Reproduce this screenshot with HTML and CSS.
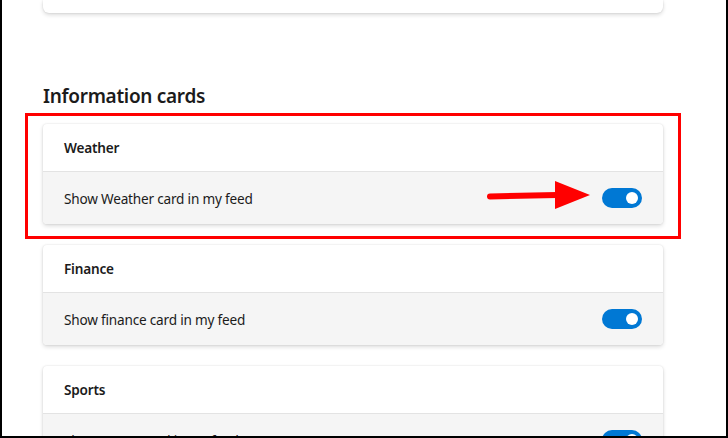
FILE: index.html
```html
<!DOCTYPE html>
<html lang="en">
<head>
    <meta charset="UTF-8">
    <meta name="viewport" content="width=device-width, initial-scale=1.0">
    <title>Information cards</title>
    <link rel="stylesheet" href="styles.css">
</head>
<body>
    <div class="page">
        <div class="content">
            <div class="card card-cut"></div>

            <h2 class="section-title">Information cards</h2>

            <div class="card highlighted">
                <div class="card-header">Weather</div>
                <div class="card-row">
                    <span>Show Weather card in my feed</span>
                    <svg class="arrow" width="110" height="32" viewBox="0 0 110 32">
                        <path d="M3 16.5 L70 15" stroke="#ff0000" stroke-width="6" stroke-linecap="round" fill="none"/>
                        <polygon points="68,1 68,29 103,15" fill="#ff0000"/>
                    </svg>
                    <span class="toggle on"></span>
                </div>
            </div>

            <div class="card">
                <div class="card-header">Finance</div>
                <div class="card-row">
                    <span>Show finance card in my feed</span>
                    <span class="toggle on"></span>
                </div>
            </div>

            <div class="card">
                <div class="card-header">Sports</div>
                <div class="card-row">
                    <span>Show sports card in my feed</span>
                    <span class="toggle on"></span>
                </div>
            </div>
        </div>
    </div>
</body>
</html>
```

FILE: styles.css
```css
* {
    box-sizing: border-box;
}
html, body {
    margin: 0;
    background-color: #fff;
}
body {
    font-family: "Segoe UI", "Noto Sans", Arial, sans-serif;
    color: #1b1b1b;
    font-size: 13.6px;
    letter-spacing: -0.2px;
}
.page {
    width: 728px;
    height: 438px;
    border-left: 2px solid #000;
    border-right: 2px solid #000;
    border-bottom: 2px solid #000;
    overflow: hidden;
}
.content {
    width: 620px;
    margin-left: 41px;
}
.card {
    position: relative;
    background-color: #fff;
    border-radius: 4px;
    box-shadow: 0 0 2px rgba(0, 0, 0, 0.12), 0 2px 4px rgba(0, 0, 0, 0.14);
    margin-bottom: 21px;
}
.card-cut {
    height: 13px;
    border-radius: 0 0 6px 6px;
    margin-bottom: 0;
}
.section-title {
    font-size: 19px;
    font-weight: 600;
    letter-spacing: -0.3px;
    line-height: 28px;
    margin: 69px 0 14px;
}
.card-header {
    height: 48px;
    display: flex;
    align-items: center;
    padding: 0 21px;
    font-weight: 600;
    border-bottom: 1px solid #e3e3e3;
}
.card-row {
    position: relative;
    height: 52px;
    display: flex;
    align-items: center;
    justify-content: space-between;
    padding: 0 21px;
    background-color: #f5f5f5;
    border-radius: 0 0 4px 4px;
}
.toggle {
    position: relative;
    width: 40px;
    height: 20px;
    border-radius: 10px;
    background-color: #0078d4;
}
.toggle::after {
    content: "";
    position: absolute;
    top: 4px;
    right: 4px;
    width: 12px;
    height: 12px;
    border-radius: 50%;
    background-color: #fff;
}
/* annotation overlay: red box + arrow */
.highlighted::before {
    content: "";
    position: absolute;
    top: -11px;
    bottom: -15px;
    left: -18px;
    right: -18px;
    border: 3px solid #ff0000;
    pointer-events: none;
}
.arrow {
    position: absolute;
    left: 444px;
    top: 8px;
}
```
